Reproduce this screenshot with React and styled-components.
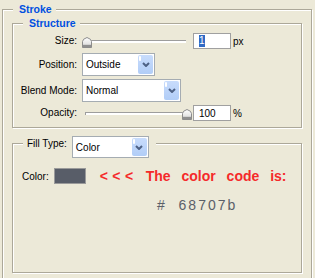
import React from 'react';
import styled, { createGlobalStyle } from 'styled-components';

const GlobalStyle = createGlobalStyle`
  html, body {
    margin: 0;
    padding: 0;
    background: #ece9d8;
    overflow: hidden;
  }
  body {
    font-family: "Liberation Sans", Arial, sans-serif;
    font-size: 10px;
    color: #000;
  }
`;

const Page = styled.div`
  width: 315px;
  height: 278px;
  overflow: hidden;
  box-sizing: border-box;
  padding: 3px 3px 0 2px;
`;

const Group = styled.fieldset`
  box-sizing: border-box;
  width: 100%;
  min-width: 0;
  margin: ${p => p.$mt || 0}px 0 0 0;
  padding: ${p => p.$pad};
  border: 1px solid #aca899;
  box-shadow: 1px 1px 0 #fff, inset 1px 1px 0 #fff;
`;

const Legend = styled.legend`
  padding: ${p => p.$pt || 0}px 0 0 0;
  margin-left: ${p => p.$ml || 0}px;
`;

const Title = styled.span`
  display: block;
  padding: 0 4px 0 6px;
  background: #ece9d8;
  font-weight: bold;
  font-size: 10.5px;
  line-height: 13px;
  color: #0050e0;
`;

const LegendRow = styled.div`
  display: flex;
  align-items: flex-start;
  gap: 5px;
  padding: 0 7px 0 4px;
  background: #ece9d8;
`;

const Field = styled.div`
  display: flex;
  align-items: center;
  height: ${p => p.$h}px;
  margin-top: ${p => p.$mt || 0}px;
`;

const Label = styled.span`
  flex: none;
  width: 58px;
  margin-right: 5px;
  text-align: right;
  white-space: nowrap;
  line-height: 14px;
`;

const LegendLabel = styled.span`
  white-space: nowrap;
  line-height: 14px;
  margin-top: 1px;
`;

const SelectBox = styled.div`
  flex: none;
  display: flex;
  box-sizing: border-box;
  width: ${p => p.$w}px;
  height: ${p => p.$h || 23}px;
  border: 1px solid #a5acb2;
  background: #fff;
`;

const SelectValue = styled.span`
  flex: 1;
  display: flex;
  align-items: center;
  padding-left: 3px;
`;

const DropButton = styled.span`
  position: relative;
  flex: none;
  width: 15px;
  margin: 1px;
  border-radius: 2px;
  background: linear-gradient(#c8dcfc, #b1cdf7);
  display: flex;
  align-items: center;
  justify-content: center;
  &::before {
    content: '';
    position: absolute;
    left: 1px;
    top: 1px;
    width: 2px;
    height: 5px;
    border-radius: 1px;
    background: #fff;
  }
`;

const SliderBox = styled.div`
  position: relative;
  flex: none;
  width: 109px;
  height: 16px;
  display: flex;
  align-items: center;
  margin-right: 2px;
`;

const Track = styled.div`
  flex: 1;
  height: 2px;
  margin: 1px 5px 0 3px;
  border-top: 1px solid #9d9d9d;
  border-left: 1px solid #9d9d9d;
  background: #fff;
`;

const Thumb = styled.svg`
  position: absolute;
  top: 4px;
`;

const NumBox = styled.div`
  flex: none;
  box-sizing: border-box;
  width: 38px;
  height: 16px;
  border: 1px solid #a0a0a0;
  background: #fff;
  padding-left: 5px;
  display: flex;
  align-items: center;
`;

const Selected = styled.span`
  background: #316ac5;
  color: #fff;
  line-height: 12px;
`;

const Unit = styled.span`
  margin-left: 2px;
`;

const ColorRow = styled.div`
  display: flex;
  align-items: center;
  height: 16px;
`;

const Swatch = styled.div`
  width: 32px;
  height: 16px;
  box-sizing: border-box;
  margin-left: 5px;
  border: 1px solid #9a9a9a;
  background: ${p => p.$color};
`;

const Note = styled.div`
  display: flex;
  align-items: center;
  margin-left: 14px;
  font-size: 14px;
  font-weight: bold;
  color: #f52a2a;
  white-space: nowrap;
`;

const Arrows = styled.span`
  letter-spacing: 4.5px;
`;

const Message = styled.span`
  margin-left: 8px;
  word-spacing: 7px;
`;

const Code = styled.div`
  margin: 13px 0 0 135px;
  font-size: 14px;
  line-height: 16px;
  letter-spacing: 2px;
  color: #5b6069;
  white-space: pre;
`;

function Chevron() {
  return (
    <svg width="8" height="5" viewBox="0 0 8 5">
      <polyline points="1,1 4,4 7,1" fill="none" stroke="#4d6185" strokeWidth="2" />
    </svg>
  );
}

function Select({ value, width, height }) {
  return (
    <SelectBox $w={width} $h={height}>
      <SelectValue>{value}</SelectValue>
      <DropButton>
        <Chevron />
      </DropButton>
    </SelectBox>
  );
}

function Slider({ value, max }) {
  const left = Math.round((value / max) * 100);
  return (
    <SliderBox>
      <Track />
      <Thumb width="10" height="11" viewBox="0 0 10 11" style={{ left }}>
        <defs>
          <linearGradient id="thumbFill" x1="0" y1="0" x2="0" y2="1">
            <stop offset="0" stopColor="#ffffff" />
            <stop offset="0.6" stopColor="#e6e6e6" />
            <stop offset="1" stopColor="#9a9a9a" />
          </linearGradient>
        </defs>
        <path
          d="M0.5 4.5 Q0.5 2 5 0.5 Q9.5 2 9.5 4.5 V10.5 H0.5 Z"
          fill="url(#thumbFill)"
          stroke="#8c8c8c"
        />
        <rect x="1" y="8" width="8" height="2" fill="#8f8f8f" />
      </Thumb>
    </SliderBox>
  );
}

export default function App() {
  return (
    <>
      <GlobalStyle />
      <Page>
        <Group $pad="1px 9px 20px 9px">
          <Legend $ml={1}>
            <Title>Stroke</Title>
          </Legend>

          <Group $pad="3px 6px 6px 6px">
            <Legend $ml={4}>
              <Title>Structure</Title>
            </Legend>
            <Field $h={16}>
              <Label>Size:</Label>
              <Slider value={0} max={100} />
              <NumBox>
                <Selected>1</Selected>
              </NumBox>
              <Unit>px</Unit>
            </Field>
            <Field $h={23} $mt={4}>
              <Label>Position:</Label>
              <Select value="Outside" width={73} />
            </Field>
            <Field $h={23} $mt={3}>
              <Label>Blend Mode:</Label>
              <Select value="Normal" width={99} />
            </Field>
            <Field $h={16} $mt={3}>
              <Label>Opacity:</Label>
              <Slider value={100} max={100} />
              <NumBox>100</NumBox>
              <Unit>%</Unit>
            </Field>
          </Group>

          <Group $mt={1} $pad="10px 9px 59px 9px">
            <Legend $ml={1} $pt={7}>
              <LegendRow>
                <LegendLabel>Fill Type:</LegendLabel>
                <Select value="Color" width={77} height={22} />
              </LegendRow>
            </Legend>
            <ColorRow>
              <span>Color:</span>
              <Swatch $color="#585d68" />
              <Note>
                <Arrows>&lt;&lt;&lt;</Arrows>
                <Message>The color code is:</Message>
              </Note>
            </ColorRow>
            <Code>{'#  68707b'}</Code>
          </Group>
        </Group>
      </Page>
    </>
  );
}
